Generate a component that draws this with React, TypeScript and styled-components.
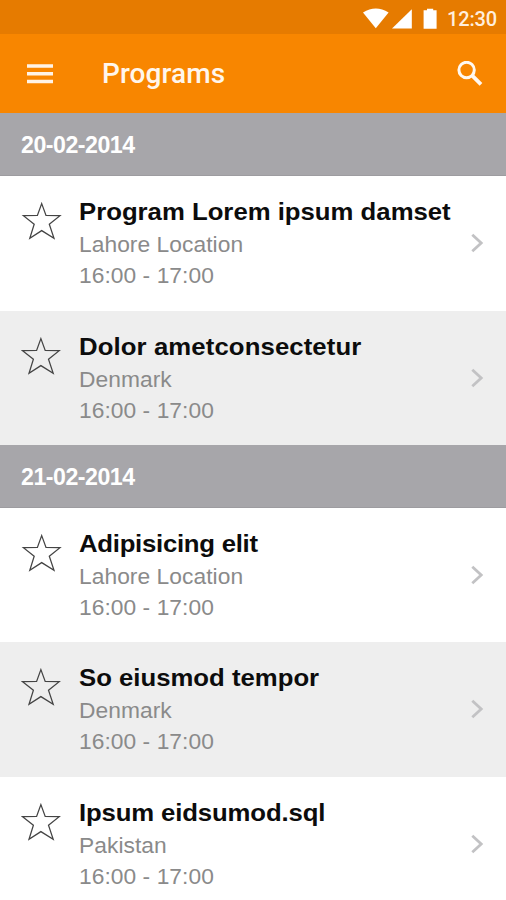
import React from "react";
import styled, { createGlobalStyle } from "styled-components";

const GlobalStyle = createGlobalStyle`
  * { box-sizing: border-box; }
  html, body { margin: 0; padding: 0; background: #fff; }
`;

const Screen = styled.main`
  width: 506px;
  height: 900px;
  overflow: hidden;
  background: #fff;
  font-family: "Liberation Sans", Arial, sans-serif;
`;

const StatusBar = styled.div`
  display: flex;
  align-items: center;
  justify-content: flex-end;
  height: 34px;
  padding: 4px 9px 0 0;
  background: #e67b00;
`;

const StatusIcons = styled.svg`
  display: block;
  width: 76px;
  height: 22px;
  margin-right: 8px;
`;

const Clock = styled.span`
  font: 500 20px/22px Roboto, sans-serif;
  letter-spacing: -0.15px;
  color: #ffeedd;
`;

const Toolbar = styled.header`
  display: flex;
  align-items: center;
  height: 79px;
  padding: 0 23px 0 26px;
  background: #f88600;
`;

const ToolbarIcon = styled.svg`
  display: block;
  flex: none;
`;

const ToolbarTitle = styled.h1`
  flex: 1;
  margin: 1px 0 0 48px;
  font: 500 28px/34px Roboto, sans-serif;
  letter-spacing: 0.1px;
  color: #fff6ec;
`;

const DateHeader = styled.h2`
  height: 63.2px;
  margin: 0;
  padding: 0 21px;
  border-bottom: 1px solid #9d9ca0;
  background: #a7a6aa;
  font-size: 24px;
  line-height: 63px;
  font-weight: 700;
  color: #fff;
`;

const DateLabel = styled.span`
  display: inline-block;
  letter-spacing: -0.5px;
  transform: scaleX(0.965);
  transform-origin: left;
`;

const Row = styled.article<{ $shaded: boolean }>`
  display: flex;
  height: 134.35px;
  padding: 20px 21px 0;
  background: ${(p) => (p.$shaded ? "#eeeeee" : "#ffffff")};
`;

const Star = styled.svg`
  display: block;
  flex: none;
  width: 42px;
  height: 42px;
  margin-top: 4px;
`;

const Details = styled.div`
  flex: 1;
  padding-left: 16px;
  white-space: nowrap;
`;

const Name = styled.h3<{ $tracking: number }>`
  margin: 0 0 1px;
  font-size: 24.5px;
  line-height: 32px;
  font-weight: 700;
  letter-spacing: ${(p) => p.$tracking}px;
  color: #0c0c0c;
  transform: scaleX(1.05);
  transform-origin: left;
`;

const Meta = styled.p`
  margin: 0;
  font-size: 22px;
  line-height: 31px;
  letter-spacing: 0.05px;
  color: #8a8a8a;
  transform: scaleX(1.035);
  transform-origin: left;
`;

const Chevron = styled.svg`
  display: block;
  flex: none;
  width: 14px;
  height: 20px;
  margin-top: 37px;
`;

type Program = { name: string; place: string; time: string; shaded: boolean; tracking: number };
type Day = { date: string; programs: Program[] };

const time = "16:00 - 17:00";

const days: Day[] = [
  {
    date: "20-02-2014",
    programs: [
      { name: "Program Lorem ipsum damset", place: "Lahore Location", time, shaded: false, tracking: 0 },
      { name: "Dolor ametconsectetur", place: "Denmark", time, shaded: true, tracking: 0.1 },
    ],
  },
  {
    date: "21-02-2014",
    programs: [
      { name: "Adipisicing elit", place: "Lahore Location", time, shaded: false, tracking: -0.25 },
      { name: "So eiusmod tempor", place: "Denmark", time, shaded: true, tracking: 0 },
      { name: "Ipsum eidsumod.sql", place: "Pakistan", time, shaded: false, tracking: -0.13 },
    ],
  },
];

function ProgramRow({ program, first }: { program: Program; first: boolean }) {
  return (
    <Row $shaded={program.shaded}>
      <Star viewBox={first ? "0 0 42 42" : "0.8 0 42 42"} fill="none" stroke="#444" strokeWidth="1.25">
        <path d="M20.7 3.6 L25 15.5 L39 15.7 L28.3 24.2 L33 38.2 L20.7 30.6 L8.8 38.2 L13.2 24.2 L2.4 15.7 L16.4 15.5 Z" />
      </Star>
      <Details>
        <Name $tracking={program.tracking}>{program.name}</Name>
        <Meta>{program.place}</Meta>
        <Meta>{program.time}</Meta>
      </Details>
      <Chevron viewBox="0 0 14 20" fill="none" stroke="#c2c2c4" strokeWidth="2.8">
        <path d="M1.3 1.8 L10.2 10 L1.3 18.2" />
      </Chevron>
    </Row>
  );
}

export default function App() {
  return (
    <Screen>
      <GlobalStyle />
      <StatusBar>
        <StatusIcons viewBox="0 0 76 22" fill="#fff">
          <path d="M0 4.6 Q12.8 -3.4 25.6 4.6 L12.8 20.3 Z" />
          <path d="M29 20.6 L48.8 1.2 V20.6 Z" />
          <path d="M60.6 2.3 H64 V0.8 H70.2 V2.3 H73.6 V20.7 H60.6 Z" />
        </StatusIcons>
        <Clock>12:30</Clock>
      </StatusBar>
      <Toolbar>
        <ToolbarIcon width="28" height="20" viewBox="0 0 28 20" stroke="#fff3e6" strokeWidth="3.4">
          <path d="M1 2 H27 M1 9.8 H27 M1 17.5 H27" />
        </ToolbarIcon>
        <ToolbarTitle>Programs</ToolbarTitle>
        <ToolbarIcon width="26" height="26" viewBox="0 0 26 26" fill="none" stroke="#fff8f0" strokeWidth="3">
          <circle cx="9.6" cy="9" r="7.7" />
          <path d="M15.2 14.6 L24 23.4" strokeWidth="3.8" />
        </ToolbarIcon>
      </Toolbar>
      {days.map((day) => (
        <section key={day.date}>
          <DateHeader>
            <DateLabel>{day.date}</DateLabel>
          </DateHeader>
          {day.programs.map((program, index) => (
            <ProgramRow key={program.name} program={program} first={index === 0} />
          ))}
        </section>
      ))}
    </Screen>
  );
}
